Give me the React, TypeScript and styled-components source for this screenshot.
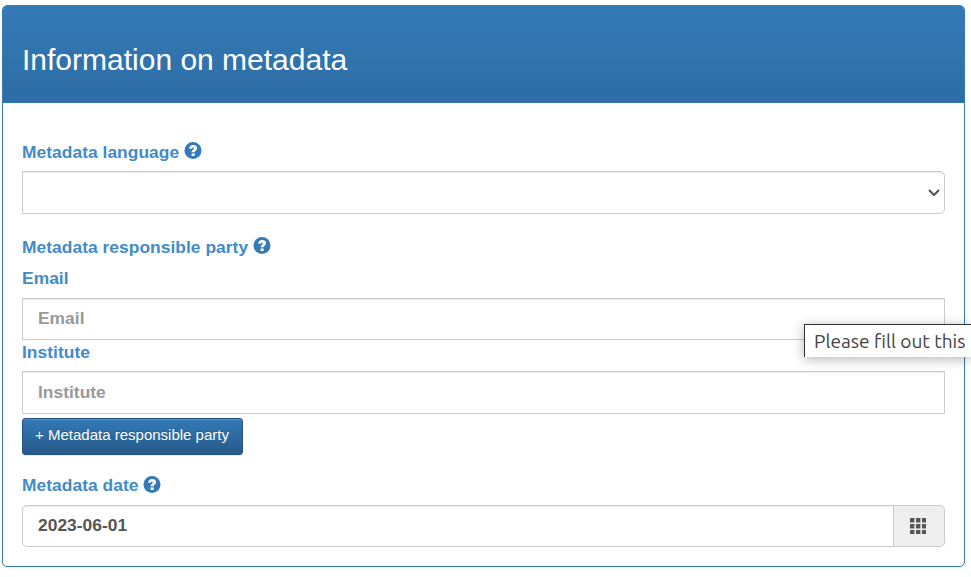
import React from "react";
import styled, { createGlobalStyle } from "styled-components";

const GlobalStyle = createGlobalStyle`
  * { box-sizing: border-box; }
  html, body { margin: 0; background: #fff; overflow: hidden; }
  body { font-family: "Liberation Sans", Arial, sans-serif; }
`;

const Page = styled.main`
  position: relative;
  width: 971px;
  height: 577px;
  overflow: hidden;
  padding: 5px 6px 0 2px;
`;

const Panel = styled.section`
  height: 562px;
  border: 1px solid #337ab7;
  border-radius: 5px;
  box-shadow: 0 1px 2px rgba(0, 0, 0, 0.05);
  overflow: hidden;
`;

const PanelHeader = styled.header`
  height: 97px;
  padding: 36px 19px 0;
  border-bottom: 1px solid #337ab7;
  background: linear-gradient(#337ab7, #2e6da4);
`;

const Title = styled.h1`
  margin: 0;
  font-size: 30px;
  line-height: 36px;
  font-weight: 400;
  color: #fff;
`;

const Form = styled.form`
  display: flex;
  flex-direction: column;
  padding: 39px 19px 0;
`;

const Label = styled.label<{ $top?: number; $bottom?: number }>`
  display: flex;
  gap: 4.5px;
  height: 20px;
  margin: ${(p) => p.$top ?? 0}px 0 ${(p) => p.$bottom ?? 9}px;
  font-size: 17.4px;
  letter-spacing: 0.035px;
  line-height: 20px;
  font-weight: 700;
  color: #428bca;
  white-space: nowrap;
`;

const HelpSvg = styled.svg<{ $drop?: number }>`
  display: block;
  width: 18px;
  height: 18px;
  margin-top: ${(p) => p.$drop ?? 0}px;
`;

const SelectBox = styled.div`
  display: flex;
  align-items: center;
  justify-content: flex-end;
  height: 43px;
  padding-right: 4px;
  border: 1px solid #ccc;
  border-radius: 0 5px 5px 0;
  box-shadow: inset 0 1px 1px rgba(0, 0, 0, 0.075);
`;

const Input = styled.input<{ $height?: number; $joined?: boolean }>`
  flex: none;
  width: 100%;
  min-width: 0;
  height: ${(p) => p.$height ?? 42}px;
  margin: 0;
  padding: 0 15px ${(p) => (p.$height ? 0 : 2)}px;
  border: 1px solid #ccc;
  border-radius: ${(p) => (p.$joined ? "5px 0 0 5px" : "0")};
  background: #fff;
  box-shadow: inset 0 1px 1px rgba(0, 0, 0, 0.075);
  font: 700 17.4px "Liberation Sans", Arial, sans-serif;
  letter-spacing: 0.02px;
  color: #555;
  outline: none;
  &::placeholder { color: #999; opacity: 1; }
`;

const AddButton = styled.button`
  align-self: flex-start;
  width: 221px;
  height: 37px;
  margin-top: 4px;
  padding: 0 1px 4px 0;
  border: 1px solid #245580;
  border-radius: 3px;
  background: linear-gradient(#337ab7, #265a88);
  box-shadow: inset 0 1px 0 rgba(255, 255, 255, 0.15), 0 1px 1px rgba(0, 0, 0, 0.075);
  text-shadow: 0 -1px 0 rgba(0, 0, 0, 0.2);
  font: 400 15px "Liberation Sans", Arial, sans-serif;
  white-space: nowrap;
  color: #fff;
`;

const DateGroup = styled.div`
  display: grid;
  grid-template-columns: 872px 51px;
  height: 42px;
`;

const Addon = styled.span`
  display: flex;
  align-items: center;
  justify-content: center;
  padding-right: 2px;
  border: 1px solid #ccc;
  border-left: 0;
  border-radius: 0 5px 5px 0;
  background: #eee;
`;

const Tooltip = styled.div`
  position: absolute;
  left: 804px;
  top: 324px;
  width: 167px;
  height: 33px;
  padding-left: 9px;
  border: solid #333;
  border-width: 1px 0 0 1px;
  background: #fff;
  box-shadow: 0 2px 12px rgba(0, 0, 0, 0.3);
  font: 400 19.1px/33px Ubuntu, "Noto Sans", sans-serif;
  white-space: nowrap;
  color: #444;
`;

const Help = ({ drop }: { drop?: number }) => (
  <HelpSvg viewBox="0 0 18 18" $drop={drop}>
    <circle cx="9" cy="8.5" r="8.5" fill="#337ab7" />
    <path d="M5.2 6.7C5.3 4.4 6.8 3.1 9.2 3.1c2.3 0 3.9 1.2 3.9 3.1 0 2.2-2.3 2.3-2.4 4.1H7.6c0-2.5 2.1-2.6 2.1-3.9 0-.5-.3-.8-.8-.8-.6 0-.9.4-.9 1.1z" fill="#fff" />
    <path d="M7.6 11.4h3.1v2.6H7.6z" fill="#fff" />
  </HelpSvg>
);

const Chevron = () => (
  <svg width="12" height="9" viewBox="0 0 12 9">
    <path d="M1 2 6 7 11 2" fill="none" stroke="#555" strokeWidth="2.1" />
  </svg>
);

const GridIcon = () => (
  <svg width="16" height="16" viewBox="0 0 16 16" fill="#555">
    {[0, 6, 12].map((y) =>
      [0, 6, 12].map((x) => <rect key={`${x}-${y}`} x={x} y={y} width="4.4" height="4.4" rx=".4" />)
    )}
  </svg>
);

export default function App() {
  return (
    <>
      <GlobalStyle />
      <Page>
        <Panel>
          <PanelHeader>
            <Title>Information on metadata</Title>
          </PanelHeader>
          <Form>
            <Label>Metadata language <Help /></Label>
            <SelectBox><Chevron /></SelectBox>
            <Label $top={23} $bottom={11}>Metadata responsible party <Help /></Label>
            <Label $bottom={10}>Email</Label>
            <Input placeholder="Email" />
            <Label $top={2}>Institute</Label>
            <Input placeholder="Institute" $height={43} />
            <AddButton type="button">+ Metadata responsible party</AddButton>
            <Label $top={20} $bottom={10}>Metadata date <Help drop={1} /></Label>
            <DateGroup>
              <Input defaultValue="2023-06-01" $joined />
              <Addon><GridIcon /></Addon>
            </DateGroup>
          </Form>
        </Panel>
        <Tooltip>Please fill out this</Tooltip>
      </Page>
    </>
  );
}
